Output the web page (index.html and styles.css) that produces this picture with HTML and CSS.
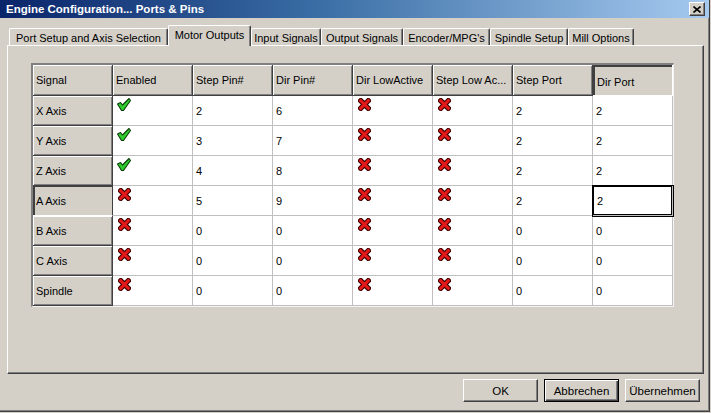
FILE: index.html
```html
<!DOCTYPE html>
<html>
<head>
<meta charset="utf-8">
<link rel="stylesheet" href="styles.css">
</head>
<body>
<svg class="defs" width="0" height="0">
  <defs>
    <symbol id="chk" viewBox="0 0 14 13">
      <polygon points="0.5,6 3.5,4.5 5.5,7 12,0.5 13.5,2.5 6.5,12.5 4.5,12.5" fill="#2ecc2e" stroke="#0b3d0b" stroke-width="1.1" stroke-linejoin="round"/>
    </symbol>
    <symbol id="crs" viewBox="0 0 12 12">
      <path d="M2.5 2.5 L9.5 9.5 M9.5 2.5 L2.5 9.5" stroke="#3a0000" stroke-width="4.8" stroke-linecap="square"/>
      <path d="M2.5 2.5 L9.5 9.5 M9.5 2.5 L2.5 9.5" stroke="#e31818" stroke-width="2.8" stroke-linecap="square"/>
    </symbol>
  </defs>
</svg>
<div class="window">
  <div class="titlebar">
    <span class="title">Engine Configuration... Ports &amp; Pins</span>
    <div class="close"><svg width="8" height="7" viewBox="0 0 8 7"><path d="M0.5 0.5 L7.5 6.5 M7.5 0.5 L0.5 6.5" stroke="#000" stroke-width="1.6"/></svg></div>
  </div>
  <div class="content">
    <div class="tabs">
      <div class="tab t1">Port Setup and Axis Selection</div>
      <div class="tab t2 active">Motor Outputs</div>
      <div class="tab t3">Input Signals</div>
      <div class="tab t4">Output Signals</div>
      <div class="tab t5">Encoder/MPG's</div>
      <div class="tab t6">Spindle Setup</div>
      <div class="tab t7">Mill Options</div>
    </div>
    <div class="panel">
      <div class="grid">
        <div class="hd">Signal</div>
        <div class="hd">Enabled</div>
        <div class="hd">Step Pin#</div>
        <div class="hd">Dir Pin#</div>
        <div class="hd">Dir LowActive</div>
        <div class="hd">Step Low Ac...</div>
        <div class="hd">Step Port</div>
        <div class="hd sel">Dir Port</div>

        <div class="rh">X Axis</div>
        <div class="cell ic"><svg class="chk"><use href="#chk"/></svg></div>
        <div class="cell">2</div><div class="cell">6</div>
        <div class="cell ic"><svg class="crs"><use href="#crs"/></svg></div>
        <div class="cell ic"><svg class="crs"><use href="#crs"/></svg></div>
        <div class="cell">2</div><div class="cell">2</div>

        <div class="rh">Y Axis</div>
        <div class="cell ic"><svg class="chk"><use href="#chk"/></svg></div>
        <div class="cell">3</div><div class="cell">7</div>
        <div class="cell ic"><svg class="crs"><use href="#crs"/></svg></div>
        <div class="cell ic"><svg class="crs"><use href="#crs"/></svg></div>
        <div class="cell">2</div><div class="cell">2</div>

        <div class="rh">Z Axis</div>
        <div class="cell ic"><svg class="chk"><use href="#chk"/></svg></div>
        <div class="cell">4</div><div class="cell">8</div>
        <div class="cell ic"><svg class="crs"><use href="#crs"/></svg></div>
        <div class="cell ic"><svg class="crs"><use href="#crs"/></svg></div>
        <div class="cell">2</div><div class="cell">2</div>

        <div class="rh sel">A Axis</div>
        <div class="cell ic"><svg class="crs"><use href="#crs"/></svg></div>
        <div class="cell">5</div><div class="cell">9</div>
        <div class="cell ic"><svg class="crs"><use href="#crs"/></svg></div>
        <div class="cell ic"><svg class="crs"><use href="#crs"/></svg></div>
        <div class="cell">2</div><div class="cell focus">2</div>

        <div class="rh">B Axis</div>
        <div class="cell ic"><svg class="crs"><use href="#crs"/></svg></div>
        <div class="cell">0</div><div class="cell">0</div>
        <div class="cell ic"><svg class="crs"><use href="#crs"/></svg></div>
        <div class="cell ic"><svg class="crs"><use href="#crs"/></svg></div>
        <div class="cell">0</div><div class="cell">0</div>

        <div class="rh">C Axis</div>
        <div class="cell ic"><svg class="crs"><use href="#crs"/></svg></div>
        <div class="cell">0</div><div class="cell">0</div>
        <div class="cell ic"><svg class="crs"><use href="#crs"/></svg></div>
        <div class="cell ic"><svg class="crs"><use href="#crs"/></svg></div>
        <div class="cell">0</div><div class="cell">0</div>

        <div class="rh">Spindle</div>
        <div class="cell ic"><svg class="crs"><use href="#crs"/></svg></div>
        <div class="cell">0</div><div class="cell">0</div>
        <div class="cell ic"><svg class="crs"><use href="#crs"/></svg></div>
        <div class="cell ic"><svg class="crs"><use href="#crs"/></svg></div>
        <div class="cell">0</div><div class="cell">0</div>
      </div>
    </div>
    <div class="buttons">
      <div class="btn">OK</div>
      <div class="btn default">Abbrechen</div>
      <div class="btn">Übernehmen</div>
    </div>
  </div>
</div>
</body>
</html>
```
FILE: styles.css
```css
* { box-sizing: border-box; }
html, body { margin: 0; padding: 0; }
body {
  width: 711px;
  height: 413px;
  overflow: hidden;
  background: #d4d0c8;
  font-family: "Liberation Sans", Arial, sans-serif;
  font-size: 11px;
  color: #000;
}
.defs { display: block; width: 0; height: 0; overflow: hidden; }
.window {
  width: 710px;
  height: 412px;
  border-right: 1px solid #404040;
  border-bottom: 1px solid #404040;
  box-shadow: inset -1px -1px 0 #808080;
}
.titlebar {
  height: 18px;
  background: linear-gradient(to right, #0a246a 0%, #3a6ea5 45%, #a6caf0 100%);
  display: flex;
  align-items: center;
  justify-content: space-between;
  padding: 0 4px 0 6px;
}
.title {
  color: #fff;
  font-weight: bold;
  font-size: 11.5px;
}
.close {
  width: 16px;
  height: 14px;
  background: #d4d0c8;
  border: 1px solid;
  border-color: #fff #404040 #404040 #fff;
  box-shadow: inset -1px -1px 0 #808080;
  display: flex;
  align-items: center;
  justify-content: center;
}
.content {
  padding: 7px 6px 0 7px;
}
.tabs {
  display: flex;
  align-items: flex-end;
  height: 20px;
  padding-left: 2px;
  position: relative;
  z-index: 2;
}
.tab {
  height: 17px;
  display: flex;
  align-items: center;
  justify-content: center;
  padding-top: 2px;
  border-top: 1px solid #fff;
  border-left: 1px solid #fff;
  border-right: 1px solid #404040;
  box-shadow: inset -1px 0 0 #808080;
  border-radius: 2px 2px 0 0;
  white-space: nowrap;
}
.tab.active {
  height: 21px;
  margin-bottom: -1px;
  padding-top: 0;
  padding-bottom: 2px;
  background: #d4d0c8;
}
.t1 { width: 159px; }
.t2 { width: 83px; }
.t3 { width: 70px; }
.t4 { width: 82px; }
.t5 { width: 87px; }
.t6 { width: 78px; }
.t7 { width: 66px; }
.panel {
  width: 697px;
  height: 329px;
  border-top: 1px solid #fff;
  border-left: 1px solid #fff;
  border-right: 1px solid #404040;
  border-bottom: 1px solid #404040;
  box-shadow: inset -1px -1px 0 #808080;
  padding: 17px 0 0 23px;
}
.grid {
  display: grid;
  grid-template-columns: repeat(8, 80px);
  grid-template-rows: 31px repeat(7, 30px);
  width: 643px;
  border-top: 2px solid #808080;
  border-left: 2px solid #808080;
  border-right: 1px solid #f4f4f4;
  border-bottom: 1px solid #f4f4f4;
  box-shadow: inset 1px 1px 0 #404040;
  background: #fff;
}
.hd, .rh {
  background: #d4d0c8;
  border-right: 1px solid #404040;
  border-bottom: 1px solid #404040;
  box-shadow: inset 1px 1px 0 #fff, inset -1px -1px 0 #808080;
  display: flex;
  align-items: center;
  padding-left: 3px;
  white-space: nowrap;
}
.hd.sel {
  box-shadow: inset 2px 2px 0 #404040;
  border-bottom-color: #fff;
  border-right-color: #fff;
  padding-left: 4px;
  padding-top: 3px;
  background: #d4d0c8;
}
.rh.sel {
  box-shadow: inset 2px 1px 0 #404040;
  border-bottom-color: #fff;
}
.cell {
  background: #fff;
  border-right: 1px solid #c0c0c0;
  border-bottom: 1px solid #c0c0c0;
  display: flex;
  align-items: center;
  padding-left: 3px;
  padding-top: 1px;
}
.cell.ic {
  align-items: flex-start;
  padding: 2px 0 0 4px;
}
.chk { width: 14px; height: 13px; }
.crs { width: 13px; height: 13px; margin-left: 1px; }
.cell.focus {
  position: relative;
  z-index: 1;
  box-shadow: 0 0 0 1px #000, inset 0 0 0 1px #000;
  padding-left: 4px;
}
.buttons {
  display: flex;
  justify-content: flex-end;
  gap: 6px;
  margin-top: 5px;
  padding-right: 3px;
}
.btn {
  width: 75px;
  height: 23px;
  background: #d4d0c8;
  border: 1px solid;
  border-color: #fff #404040 #404040 #fff;
  box-shadow: inset -1px -1px 0 #808080;
  display: flex;
  align-items: center;
  justify-content: center;
  font-size: 11.5px;
}
.btn.default {
  border: 1px solid #000;
  box-shadow: inset 1px 1px 0 #fff, inset -1px -1px 0 #404040, inset -2px -2px 0 #808080;
}
```
